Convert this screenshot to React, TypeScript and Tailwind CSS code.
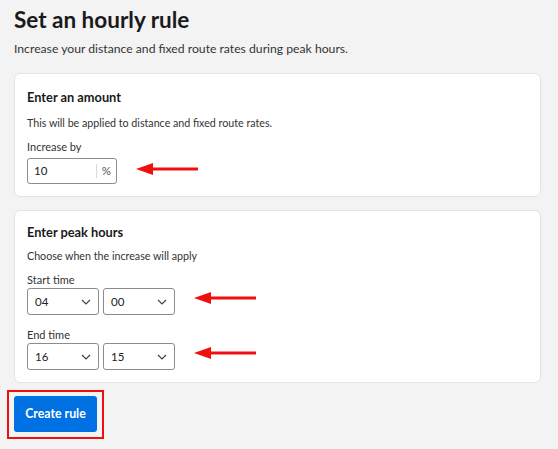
function Arrow() {
  return (
    <svg width="62" height="14" viewBox="0 0 62 14" className="shrink-0">
      <polygon points="0,7 17,1 17,13" fill="#f00f0f" />
      <rect x="15" y="5.5" width="47" height="3" fill="#f00f0f" />
    </svg>
  );
}

function TimeSelect({ value }: { value: string }) {
  return (
    <div className="w-[72px] h-[27px] border border-[#8c8c8c] rounded-[3px] bg-white flex items-center justify-between pl-[7px] pr-[7px] text-[11.5px] text-[#222]">
      <span>{value}</span>
      <svg width="10" height="6" viewBox="0 0 10 6" fill="none" stroke="#444" strokeWidth="1.2">
        <path d="M1 1l4 4 4-4" />
      </svg>
    </div>
  );
}

function TimeRow({ label, hour, minute }: { label: string; hour: string; minute: string }) {
  return (
    <div>
      <p className="text-[11px] leading-[16px] text-[#333]">{label}</p>
      <div className="flex items-center">
        <div className="flex gap-[4px]">
          <TimeSelect value={hour} />
          <TimeSelect value={minute} />
        </div>
        <div className="ml-[19px] -mt-[8px]">
          <Arrow />
        </div>
      </div>
    </div>
  );
}

export default function App() {
  return (
    <div
      className="w-[558px] h-[449px] bg-[#f3f3f3] pl-[14px] pr-[17px] pt-[3px] text-[#1b1b1b] overflow-hidden"
      style={{ fontFamily: 'Lato, "Open Sans", sans-serif' }}
    >
      <h1 className="text-[22.5px] leading-[34px] font-bold text-[#1a1a1a]">Set an hourly rule</h1>
      <p className="mt-[3px] text-[12.2px] leading-[18px] text-[#333]">
        Increase your distance and fixed route rates during peak hours.
      </p>

      {/* Amount */}
      <div className="mt-[15px] bg-white border border-[#e3e3e3] rounded-[6px] px-[12px] pt-[13px] pb-[12px]">
        <h2 className="text-[12.8px] leading-[20px] font-bold text-[#1a1a1a]">Enter an amount</h2>
        <p className="mt-[8px] text-[10.7px] leading-[16px] text-[#333]">
          This will be applied to distance and fixed route rates.
        </p>
        <p className="mt-[8px] text-[11px] leading-[16px] text-[#333]">Increase by</p>
        <div className="mt-[3px] flex items-center">
          <div className="w-[90px] h-[26px] border border-[#8c8c8c] rounded-[3px] flex items-center text-[11.5px] text-[#222]">
            <span className="flex-1 pl-[6px]">10</span>
            <span className="h-[14px] w-px bg-[#d9d9d9]" />
            <span className="px-[5px] text-[#555]">%</span>
          </div>
          <div className="ml-[19px] -mt-[4px]">
            <Arrow />
          </div>
        </div>
      </div>

      {/* Peak hours */}
      <div className="mt-[13px] bg-white border border-[#e3e3e3] rounded-[6px] px-[12px] pt-[11px] pb-[12px]">
        <h2 className="text-[12.8px] leading-[20px] font-bold text-[#1a1a1a]">Enter peak hours</h2>
        <p className="mt-[6px] text-[10.7px] leading-[16px] text-[#333]">Choose when the increase will apply</p>
        <div className="mt-[8px]">
          <TimeRow label="Start time" hour="04" minute="00" />
        </div>
        <div className="mt-[12px]">
          <TimeRow label="End time" hour="16" minute="15" />
        </div>
      </div>

      <div className="mt-[7px] -ml-[7px] inline-block border-2 border-[#f00f0f] pt-[4px] pb-[5px] px-[5px]">
        <button className="w-[83px] h-[36px] rounded-[3px] bg-[#0071e3] text-white text-[12.3px] font-bold">
          Create rule
        </button>
      </div>
    </div>
  );
}
